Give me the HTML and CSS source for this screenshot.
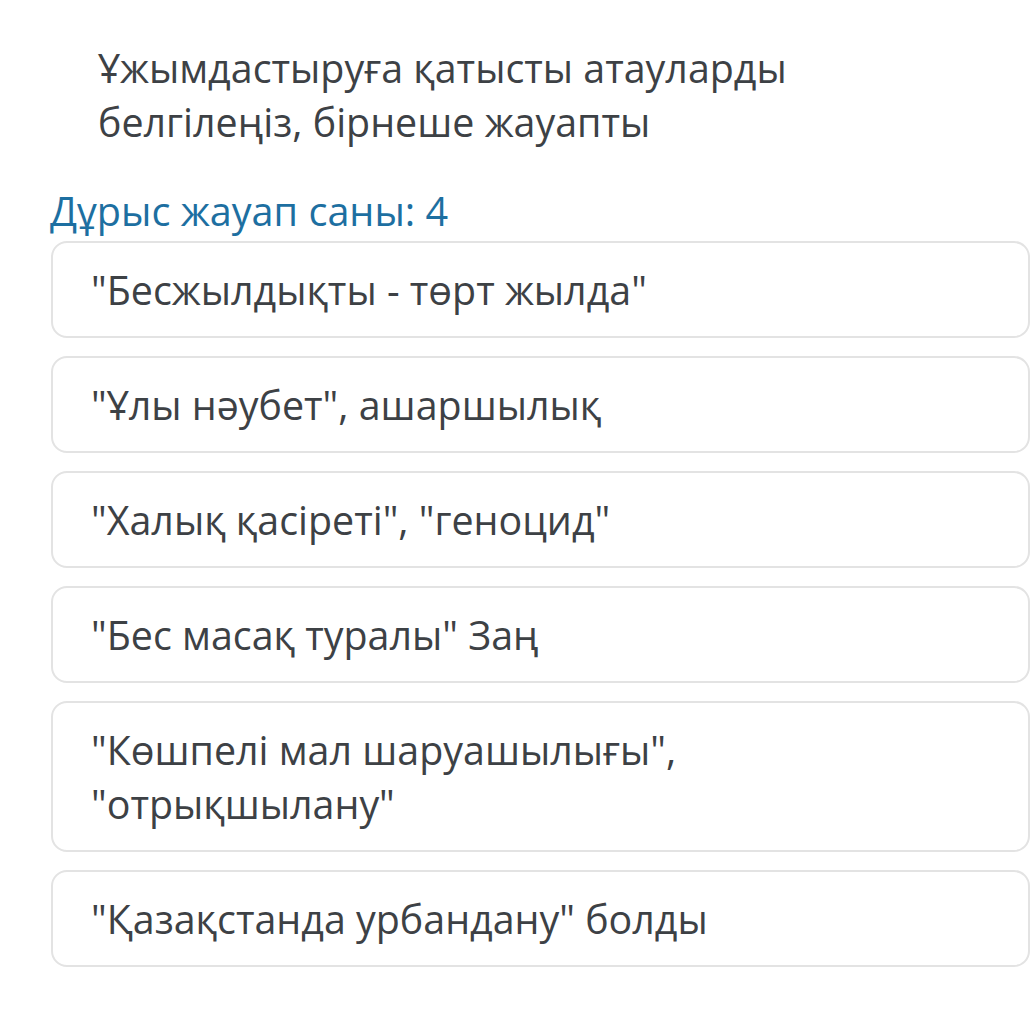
FILE: index.html
```html
<!DOCTYPE html>
<html lang="kk">
<head>
<meta charset="utf-8">
<link rel="stylesheet" href="styles.css">
</head>
<body>
<div class="page">
  <h1 class="question">Ұжымдастыруға қатысты атауларды белгілеңіз, бірнеше жауапты</h1>
  <div class="count">Дұрыс жауап саны: 4</div>
  <div class="options">
    <div class="option">"Бесжылдықты - төрт жылда"</div>
    <div class="option">"Ұлы нәубет", ашаршылық</div>
    <div class="option">"Халық қасіреті", "геноцид"</div>
    <div class="option">"Бес масақ туралы" Заң</div>
    <div class="option">"Көшпелі мал шаруашылығы",<br>"отрықшылану"</div>
    <div class="option">"Қазақстанда урбандану" болды</div>
  </div>
</div>
</body>
</html>
```

FILE: styles.css
```css
html, body {
  margin: 0;
  padding: 0;
  background: #ffffff;
}
body {
  font-family: "Open Sans", "Noto Sans", sans-serif;
  color: #3d4145;
  overflow: hidden;
}
.page {
  padding: 41px 0 0 0;
  width: 1030px;
}
.question {
  margin: 0 0 0 98px;
  width: 720px;
  font-size: 39.4px;
  font-weight: 400;
  line-height: 54px;
}
.count {
  margin: 34px 0 0 50px;
  font-size: 39.6px;
  line-height: 56px;
  color: #1d6fa1;
}
.options {
  display: flex;
  flex-direction: column;
  gap: 18px;
  margin: 2px 0 0 51px;
  width: 979px;
}
.option {
  border: 2px solid #e3e3e3;
  border-radius: 16px;
  padding: 19.5px 20px 19.5px 38px;
  font-size: 39.4px;
  line-height: 54px;
}
```
